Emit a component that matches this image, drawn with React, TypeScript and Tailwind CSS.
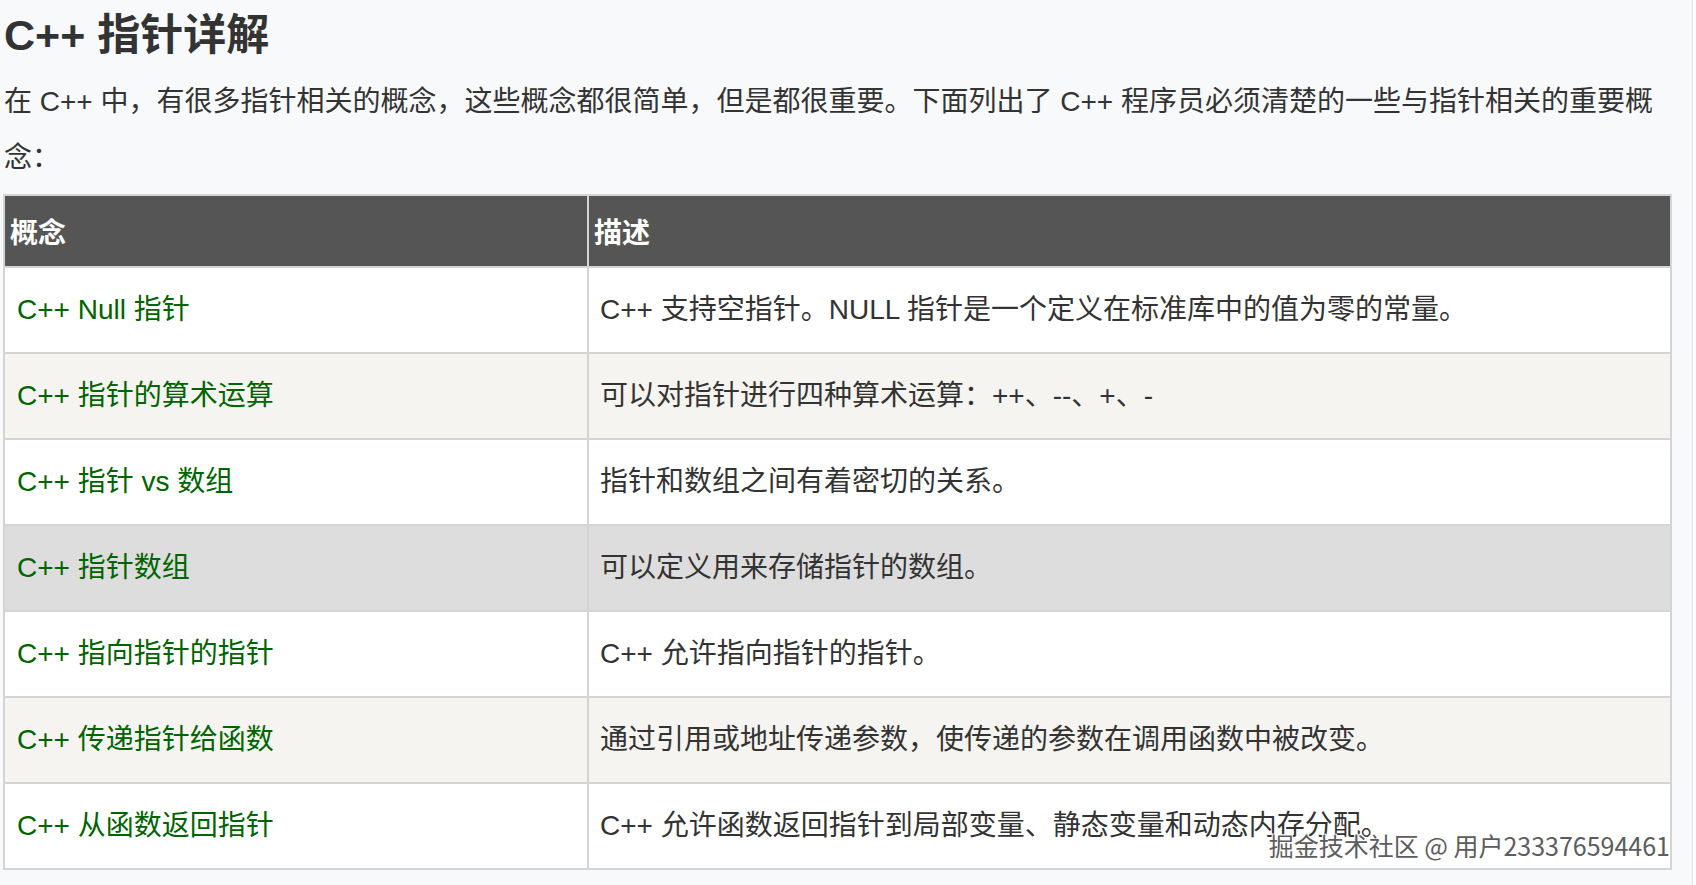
const rows = [
  { concept: 'C++ Null 指针', desc: 'C++ 支持空指针。NULL 指针是一个定义在标准库中的值为零的常量。', bg: 'bg-white' },
  { concept: 'C++ 指针的算术运算', desc: '可以对指针进行四种算术运算：++、--、+、-', bg: 'bg-[#f5f4f0]' },
  { concept: 'C++ 指针 vs 数组', desc: '指针和数组之间有着密切的关系。', bg: 'bg-white' },
  { concept: 'C++ 指针数组', desc: '可以定义用来存储指针的数组。', bg: 'bg-[#dddddd]' },
  { concept: 'C++ 指向指针的指针', desc: 'C++ 允许指向指针的指针。', bg: 'bg-white' },
  { concept: 'C++ 传递指针给函数', desc: '通过引用或地址传递参数，使传递的参数在调用函数中被改变。', bg: 'bg-[#f5f4f0]' },
  { concept: 'C++ 从函数返回指针', desc: 'C++ 允许函数返回指针到局部变量、静态变量和动态内存分配。', bg: 'bg-white' },
];

export default function App() {
  return (
    <div className="flex min-h-[885px] w-full bg-white font-['Liberation_Sans','Noto_Sans_CJK_SC',sans-serif]">
      <div className="relative w-[1693px] border-r border-[#e3e5e8] bg-[#f8f9fb] pl-[4px] text-[#333333]">
        {/* Título */}
        <h1 className="pt-[9px] text-[43px] font-bold leading-[52px] text-[#333333]">C++ 指针详解</h1>

        {/* Introducción */}
        <p className="mt-[13px] w-[1665px] text-[28px] leading-[56px]">
          在 C++ 中，有很多指针相关的概念，这些概念都很简单，但是都很重要。下面列出了 C++ 程序员必须清楚的一些与指针相关的重要概念：
        </p>

        {/* Tabla */}
        <table className="ml-[-1px] mt-[8px] w-[1669px] border-collapse border-2 border-[#d4d4d4] text-[28px]">
          <thead>
            <tr className="h-[72px] bg-[#555555] text-left text-white">
              <th className="w-[584px] border-2 border-[#d4d4d4] px-[5px] pt-[6px] font-bold">概念</th>
              <th className="border-2 border-[#d4d4d4] px-[5px] pt-[6px] font-bold">描述</th>
            </tr>
          </thead>
          <tbody>
            {rows.map((row) => (
              <tr key={row.concept} className={`h-[86px] ${row.bg}`}>
                <td className="border-2 border-[#d4d4d4] px-[12px] text-[#006400]">{row.concept}</td>
                <td className="border-2 border-[#d4d4d4] px-[11px] text-[#333333]">{row.desc}</td>
              </tr>
            ))}
          </tbody>
        </table>

        {/* Marca de agua */}
        <div className="absolute right-[22px] top-[828px] font-['Noto_Sans_CJK_SC',sans-serif] text-[25px] leading-[34px] text-[#5c5c5c] [text-shadow:1px_1px_0_#ffffff,-1px_-1px_0_#ffffff,1px_-1px_0_#ffffff,-1px_1px_0_#ffffff]">
          掘金技术社区 @ 用户233376594461
        </div>
      </div>
    </div>
  );
}
